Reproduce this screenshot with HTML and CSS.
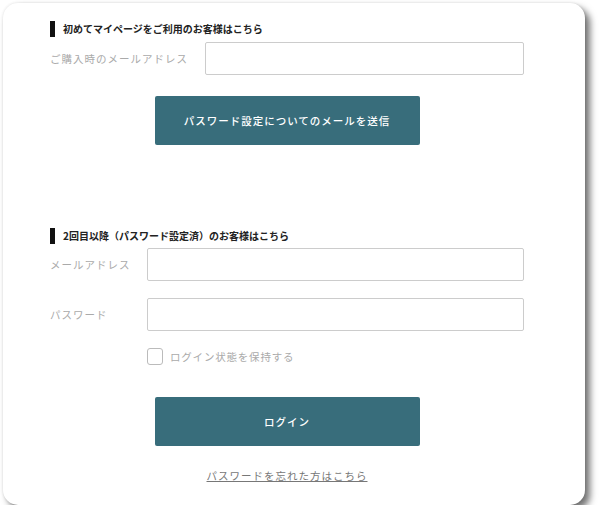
FILE: index.html
```html
<!DOCTYPE html>
<html lang="ja">
<head>
    <meta charset="UTF-8">
    <meta name="viewport" content="width=device-width, initial-scale=1.0">
    <title>ログイン</title>
    <link rel="stylesheet" href="styles.css">
</head>
<body>
    <div class="card">
        <!-- First-time users -->
        <div class="section">
            <h2 class="heading">初めてマイページをご利用のお客様はこちら</h2>
            <div class="field first">
                <label class="label label-wide">ご購入時のメールアドレス</label>
                <input class="input" type="text">
            </div>
            <button class="btn btn-send">パスワード設定についてのメールを送信</button>
        </div>

        <!-- Returning users -->
        <div class="section second">
            <h2 class="heading">2回目以降（パスワード設定済）のお客様はこちら</h2>
            <div class="field first">
                <label class="label">メールアドレス</label>
                <input class="input" type="text">
            </div>
            <div class="field">
                <label class="label">パスワード</label>
                <input class="input" type="password">
            </div>
            <div class="remember">
                <span class="checkbox"></span>
                <span class="remember-text">ログイン状態を保持する</span>
            </div>
            <button class="btn btn-login">ログイン</button>
            <div class="forgot">
                <a href="#">パスワードを忘れた方はこちら</a>
            </div>
        </div>
    </div>
</body>
</html>
```

FILE: styles.css
```css
/* Global */
* {
    margin: 0;
    padding: 0;
    box-sizing: border-box;
}

body {
    font-family: "Noto Sans CJK JP", "Noto Sans", sans-serif;
    background-color: #fff;
    color: #222;
    padding: 3px 0 0 3px;
}

/* Card */
.card {
    width: 582px;
    height: 502px;
    background-color: #fff;
    border-radius: 15px;
    box-shadow: 5px 5px 7px rgba(0, 0, 0, 0.55), 0 0 3px rgba(0, 0, 0, 0.12);
    padding: 18px 61px 0 47px;
}

/* Section headings */
.heading {
    height: 16px;
    border-left: 5px solid #111;
    padding-left: 8px;
    font-size: 10px;
    font-weight: bold;
    line-height: 16px;
    color: #222;
}

.second {
    margin-top: 83px;
}

/* Form rows */
.field {
    display: flex;
    align-items: center;
    margin-top: 17px;
}

.field.first {
    margin-top: 5px;
}

.second .field.first {
    margin-top: 4px;
}

.label {
    width: 97px;
    font-size: 10.5px;
    letter-spacing: 1px;
    color: #aaa;
}

.label-wide {
    width: 155px;
}

.input {
    flex: 1;
    height: 33px;
    border: 1px solid #ccc;
    border-radius: 2px;
    background-color: #fff;
    outline: none;
}

/* Remember me */
.remember {
    display: flex;
    align-items: center;
    margin: 17px 0 0 97px;
}

.checkbox {
    width: 16px;
    height: 17px;
    border: 1px solid #bbb;
    border-radius: 3px;
    margin-right: 7px;
}

.remember-text {
    font-size: 10.5px;
    letter-spacing: 0.8px;
    color: #aaa;
}

/* Buttons */
.btn {
    display: block;
    width: 265px;
    height: 49px;
    margin: 21px auto 0;
    border: none;
    border-radius: 2px;
    background-color: #386d7b;
    color: #fff;
    font-family: inherit;
    font-size: 10.5px;
    font-weight: 500;
    letter-spacing: 1px;
}

.btn-login {
    margin-top: 32px;
}

/* Forgot link */
.forgot {
    text-align: center;
    margin-top: 15px;
}

.forgot a {
    font-size: 10.5px;
    letter-spacing: 1px;
    color: #777;
    text-decoration: underline;
}
```
